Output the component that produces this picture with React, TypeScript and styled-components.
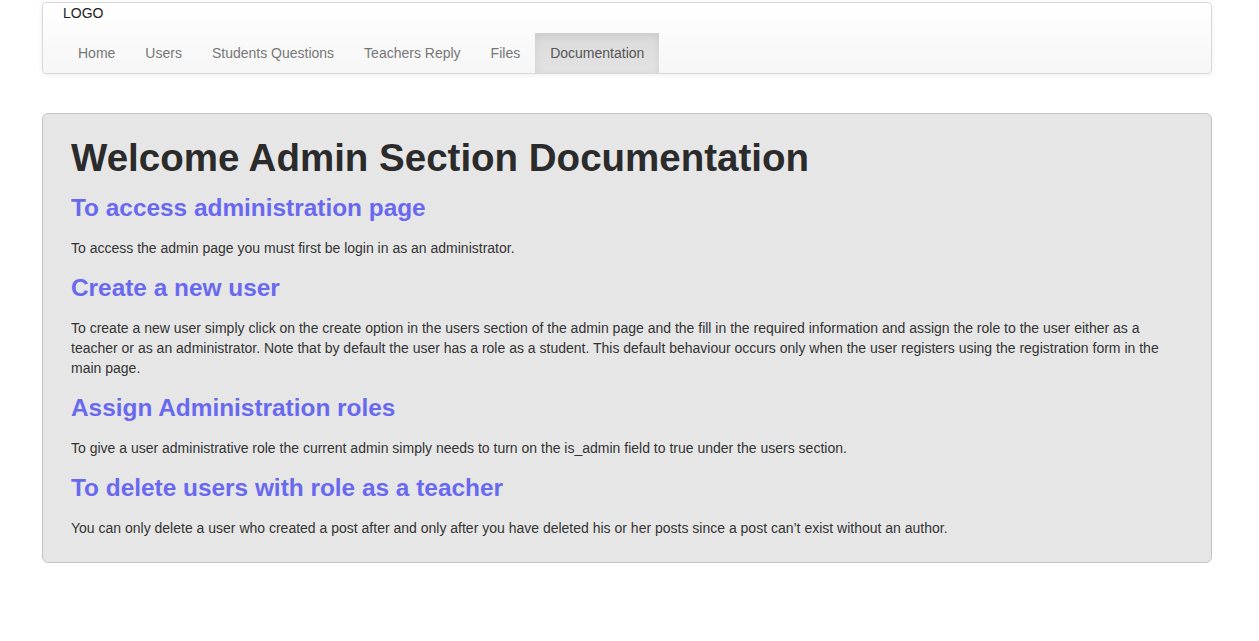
import React from 'react'
import styled, { createGlobalStyle } from 'styled-components'

const GlobalStyle = createGlobalStyle`
  html, body {
    margin: 0;
    padding: 0;
    background: #fff;
  }
  body {
    font-family: "Liberation Sans", Arial, Helvetica, sans-serif;
    font-size: 14px;
    line-height: 20px;
    color: #333;
  }
`

const Page = styled.div`
  width: 1170px;
  padding: 2px 0 0 42px;
`

const Navbar = styled.nav`
  border: 1px solid #d9d9d9;
  border-radius: 4px;
  background-image: linear-gradient(to bottom, #ffffff 0, #f6f6f6 100%);
  box-shadow: inset 0 1px 0 rgba(255, 255, 255, 0.15), 0 1px 5px rgba(0, 0, 0, 0.075);
  padding-left: 20px;
`

const Logo = styled.div`
  line-height: 20px;
  color: #222;
`

const NavList = styled.ul`
  display: flex;
  list-style: none;
  margin: 10px 0 0;
  padding: 0;
`

const NavItem = styled.li<{ $active?: boolean }>`
  height: 40px;
  line-height: 40px;
  padding: 0 15px;
  color: ${p => (p.$active ? '#555' : '#777')};
  background-image: ${p =>
    p.$active ? 'linear-gradient(to bottom, #dbdbdb 0, #e2e2e2 100%)' : 'none'};
  box-shadow: ${p => (p.$active ? 'inset 0 3px 9px rgba(0, 0, 0, 0.075)' : 'none')};
  cursor: pointer;
`

const Panel = styled.section`
  margin-top: 39px;
  background: #e6e6e6;
  border: 1px solid #c4c4c4;
  border-radius: 6px;
  padding: 20px 28px 7px;
`

const Title = styled.h1`
  margin: 0 0 13px;
  font-size: 38.5px;
  line-height: 48px;
  font-weight: bold;
  color: #2b2b2b;
`

const Heading = styled.h2`
  margin: 0 0 17px;
  font-size: 24.4px;
  line-height: 26px;
  font-weight: bold;
  color: #6969f0;
`

const Text = styled.p`
  margin: 0 0 17px;
  font-size: 14px;
  line-height: 20px;
  color: #333;
`

const links = ['Home', 'Users', 'Students Questions', 'Teachers Reply', 'Files', 'Documentation']

const sections = [
  {
    title: 'To access administration page',
    body: 'To access the admin page you must first be login in as an administrator.',
  },
  {
    title: 'Create a new user',
    body:
      'To create a new user simply click on the create option in the users section of the admin page and the fill in the required information and assign the role to the user either as a teacher or as an administrator. Note that by default the user has a role as a student. This default behaviour occurs only when the user registers using the registration form in the main page.',
  },
  {
    title: 'Assign Administration roles',
    body:
      'To give a user administrative role the current admin simply needs to turn on the is_admin field to true under the users section.',
  },
  {
    title: 'To delete users with role as a teacher',
    body:
      'You can only delete a user who created a post after and only after you have deleted his or her posts since a post can\u2019t exist without an author.',
  },
]

export default function App() {
  return (
    <>
      <GlobalStyle />
      <Page>
        <Navbar>
          <Logo>LOGO</Logo>
          <NavList>
            {links.map(l => (
              <NavItem key={l} $active={l === 'Documentation'}>
                {l}
              </NavItem>
            ))}
          </NavList>
        </Navbar>
        <Panel>
          <Title>Welcome Admin Section Documentation</Title>
          {sections.map(s => (
            <div key={s.title}>
              <Heading>{s.title}</Heading>
              <Text>{s.body}</Text>
            </div>
          ))}
        </Panel>
      </Page>
    </>
  )
}
